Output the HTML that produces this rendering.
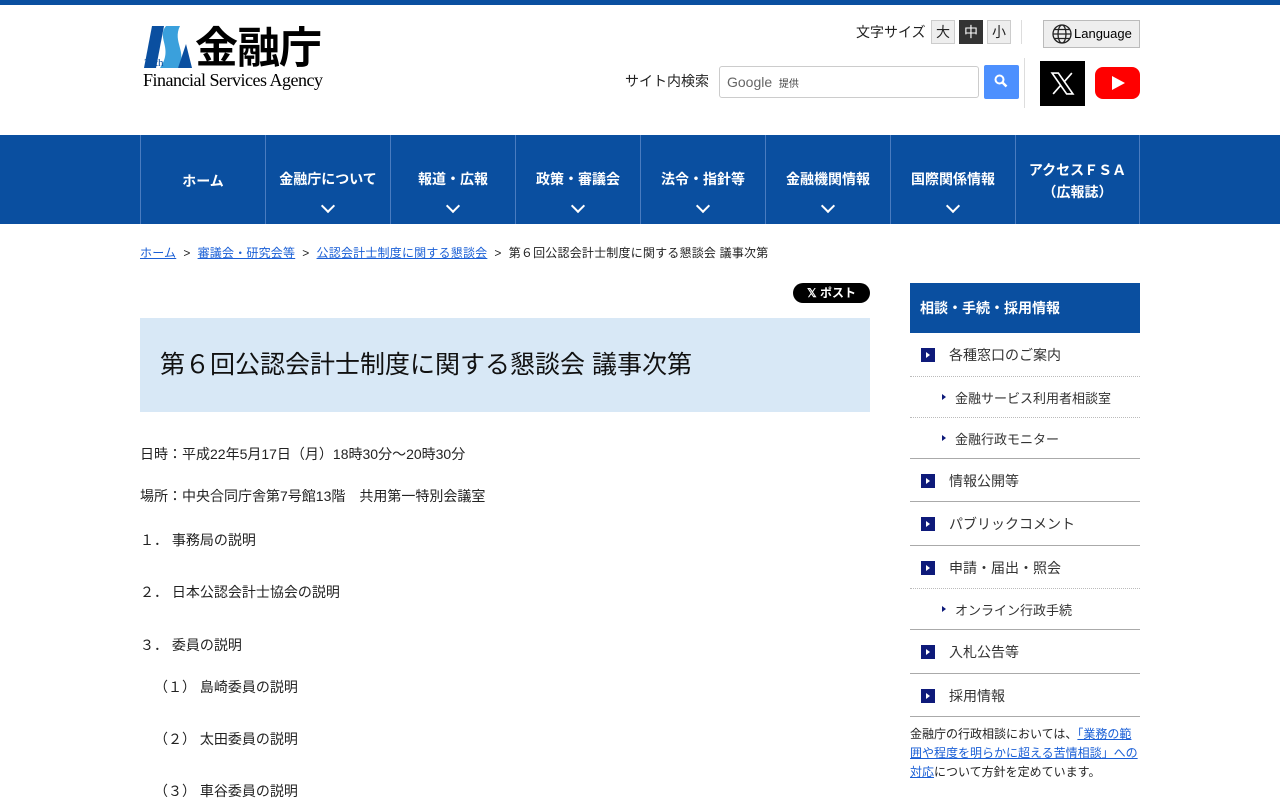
<!DOCTYPE html>
<html lang="ja"><head><meta charset="utf-8">
<style>
*{margin:0;padding:0;box-sizing:border-box}
body{width:1280px;height:800px;overflow:hidden;background:#fff;font-family:"Liberation Sans","Noto Sans CJK JP",sans-serif;color:#222;position:relative}
.top{height:5px;background:#0a4fa0}
.abs{position:absolute}
a{color:#1a5fd6}
.nav{position:absolute;top:135px;left:0;width:1280px;height:89px;background:#0a4fa0}
.nav div{position:absolute;top:0;height:89px;width:125px;border-left:1px solid #4a7cc0;color:#fff;font-weight:bold;font-size:14px;text-align:center}
.nav div span{position:absolute;left:0;right:0;top:34px}
.nav div i{position:absolute;left:57px;top:66px;width:10px;height:10px;border-right:2px solid #fff;border-bottom:2px solid #fff;transform:rotate(45deg)}
.body p{position:absolute;left:140px;font-size:14px;color:#222}
.side{position:absolute;left:910px;width:230px}
.si{position:absolute;left:0;width:230px;font-size:14px;color:#333}
.sq{position:absolute;left:11px;width:14px;height:14px;background:#0e1a7a}
.sq:after{content:"";position:absolute;left:5px;top:4px;border-left:4px solid #fff;border-top:3px solid transparent;border-bottom:3px solid transparent}
.tri{position:absolute;left:32px;border-left:4px solid #0e1a7a;border-top:3px solid transparent;border-bottom:3px solid transparent}
</style></head><body>
<div class="top"></div>
<svg class="abs" style="left:142px;top:24px" width="52" height="46" viewBox="0 0 52 46">
<polygon points="2,44 10,2 22,2 14,44" fill="#0a4fa0"/>
<path d="M24 2 C14 14 32 24 18 44 L36 44 C46 28 30 18 38 2Z" fill="#3aa0dc"/>
<polygon points="36,44 44,20 50,44" fill="#0a4fa0"/>
<text x="2" y="42" font-size="11" fill="#0a4fa0" font-family="Liberation Serif">25th</text>
</svg>
<div class="abs" style="left:195px;top:25px;font-size:43px;font-weight:bold;line-height:48px;color:#000;letter-spacing:-1px">金融庁</div>
<div class="abs" style="left:143px;top:70px;font-family:'Liberation Serif',serif;font-size:18px;line-height:20px;color:#000;letter-spacing:-0.5px">Financial Services Agency</div>
<div class="abs" style="left:856px;top:22px;font-size:14px">文字サイズ</div>
<div class="abs" style="left:931px;top:20px;width:24px;height:24px;border:1px solid #ccc;background:#eee;font-size:14px;text-align:center;line-height:22px">大</div>
<div class="abs" style="left:959px;top:20px;width:24px;height:24px;background:#333;color:#fff;font-size:14px;text-align:center;line-height:24px">中</div>
<div class="abs" style="left:987px;top:20px;width:24px;height:24px;border:1px solid #ccc;background:#eee;font-size:14px;text-align:center;line-height:22px">小</div>
<div class="abs" style="left:1021px;top:20px;width:1px;height:24px;background:#ddd"></div>
<div class="abs" style="left:1043px;top:20px;width:97px;height:28px;border:1px solid #bbb;background:#eee;font-size:13px;line-height:26px;padding-left:30px;color:#000">Language</div>
<svg class="abs" style="left:1052px;top:24px" width="20" height="20" viewBox="0 0 20 20" fill="none" stroke="#222" stroke-width="1.3"><circle cx="10" cy="10" r="9"/><ellipse cx="10" cy="10" rx="4" ry="9"/><line x1="1" y1="10" x2="19" y2="10"/><path d="M2.5 5.5h15M2.5 14.5h15"/></svg>
<div class="abs" style="left:625px;top:71px;font-size:14px">サイト内検索</div>
<div class="abs" style="left:719px;top:66px;width:260px;height:32px;border:1px solid #ccc;border-radius:3px;font-size:14px;color:#666;line-height:30px;padding-left:7px">Google <span style="font-size:10px;color:#444">&nbsp;提供</span></div>
<div class="abs" style="left:984px;top:65px;width:35px;height:34px;background:#4d90fe;border-radius:2px"></div>
<svg class="abs" style="left:994px;top:74px" width="14" height="14" viewBox="0 0 14 14"><circle cx="5.5" cy="5.5" r="4" fill="none" stroke="#fff" stroke-width="2"/><line x1="8.5" y1="8.5" x2="12.5" y2="12.5" stroke="#fff" stroke-width="2.5"/></svg>
<div class="abs" style="left:1024px;top:58px;width:1px;height:50px;background:#ddd"></div>
<div class="abs" style="left:1040px;top:61px;width:45px;height:45px;background:#000"></div>
<svg class="abs" style="left:1050px;top:71px" width="25" height="25" viewBox="0 0 24 24"><path d="M2 2h6l14 20h-6z" fill="none" stroke="#fff" stroke-width="1.6"/><path d="M21 2L13.5 10.5M3 22l7.5-8.5" stroke="#fff" stroke-width="1.6"/></svg>
<div class="abs" style="left:1095px;top:67px;width:45px;height:32px;background:#f00;border-radius:8px"></div>
<div class="abs" style="left:1112px;top:76px;border-left:13px solid #fff;border-top:7px solid transparent;border-bottom:7px solid transparent"></div>
<div class="nav">
<div style="left:140px"><span style="top:36px">ホーム</span></div>
<div style="left:265px"><span>金融庁について</span><i></i></div>
<div style="left:390px"><span>報道・広報</span><i></i></div>
<div style="left:515px"><span>政策・審議会</span><i></i></div>
<div style="left:640px"><span>法令・指針等</span><i></i></div>
<div style="left:765px"><span>金融機関情報</span><i></i></div>
<div style="left:890px"><span>国際関係情報</span><i></i></div>
<div style="left:1015px;border-right:1px solid #4a7cc0"><span style="top:24px;line-height:22px">アクセスＦＳＡ<br>（広報誌）</span></div>
</div>
<div class="abs" style="left:140px;top:244px;font-size:12px;color:#222;letter-spacing:0.2px"><a href="#">ホーム</a>&nbsp;&nbsp;&gt;&nbsp;&nbsp;<a href="#">審議会・研究会等</a>&nbsp;&nbsp;&gt;&nbsp;&nbsp;<a href="#">公認会計士制度に関する懇談会</a>&nbsp;&nbsp;&gt;&nbsp;&nbsp;第６回公認会計士制度に関する懇談会 議事次第</div>
<div class="abs" style="left:793px;top:283px;width:77px;height:20px;background:#000;border-radius:10px;color:#fff;font-size:12px;line-height:20px;text-align:center;font-weight:bold">𝕏 ポスト</div>
<div class="abs" style="left:140px;top:318px;width:730px;height:94px;background:#d8e8f6;font-size:25px;line-height:94px;padding-left:20px;color:#111">第６回公認会計士制度に関する懇談会 議事次第</div>
<div class="body">
<p style="top:444px">日時：平成22年5月17日（月）18時30分～20時30分</p>
<p style="top:486px">場所：中央合同庁舎第7号館13階　共用第一特別会議室</p>
<p style="top:530px">１． 事務局の説明</p>
<p style="top:582px">２． 日本公認会計士協会の説明</p>
<p style="top:635px">３． 委員の説明</p>
<p style="top:677px;left:154px">（１） 島崎委員の説明</p>
<p style="top:729px;left:154px">（２） 太田委員の説明</p>
<p style="top:781px;left:154px">（３） 車谷委員の説明</p>
</div>
<div class="side" style="top:283px;height:50px;background:#0a4fa0;color:#fff;font-weight:bold;font-size:14px;line-height:50px;padding-left:10px">相談・手続・採用情報</div>
<div class="side" style="top:333px">
<div class="si" style="top:0;height:44px;border-bottom:1px dotted #bbb"><div class="sq" style="top:15px"></div><span class="abs" style="left:39px;top:12px">各種窓口のご案内</span></div>
<div class="si" style="top:44px;height:41px;border-bottom:1px dotted #bbb;font-size:13px"><div class="tri" style="top:17px"></div><span class="abs" style="left:45px;top:11px">金融サービス利用者相談室</span></div>
<div class="si" style="top:85px;height:41px;border-bottom:1px solid #aaa;font-size:13px"><div class="tri" style="top:17px"></div><span class="abs" style="left:45px;top:11px">金融行政モニター</span></div>
<div class="si" style="top:126px;height:43px;border-bottom:1px solid #aaa"><div class="sq" style="top:15px"></div><span class="abs" style="left:39px;top:12px">情報公開等</span></div>
<div class="si" style="top:169px;height:44px;border-bottom:1px solid #aaa"><div class="sq" style="top:15px"></div><span class="abs" style="left:39px;top:12px">パブリックコメント</span></div>
<div class="si" style="top:213px;height:43px;border-bottom:1px dotted #bbb"><div class="sq" style="top:15px"></div><span class="abs" style="left:39px;top:12px">申請・届出・照会</span></div>
<div class="si" style="top:256px;height:41px;border-bottom:1px solid #aaa;font-size:13px"><div class="tri" style="top:17px"></div><span class="abs" style="left:45px;top:11px">オンライン行政手続</span></div>
<div class="si" style="top:297px;height:44px;border-bottom:1px solid #aaa"><div class="sq" style="top:15px"></div><span class="abs" style="left:39px;top:12px">入札公告等</span></div>
<div class="si" style="top:341px;height:43px;border-bottom:1px solid #aaa"><div class="sq" style="top:15px"></div><span class="abs" style="left:39px;top:12px">採用情報</span></div>
<div class="si" style="top:392px;font-size:12px;line-height:19px;color:#222">金融庁の行政相談においては、<a href="#">「業務の範囲や程度を明らかに超える苦情相談」への対応</a>について方針を定めています。</div>
</div>
</body></html>
